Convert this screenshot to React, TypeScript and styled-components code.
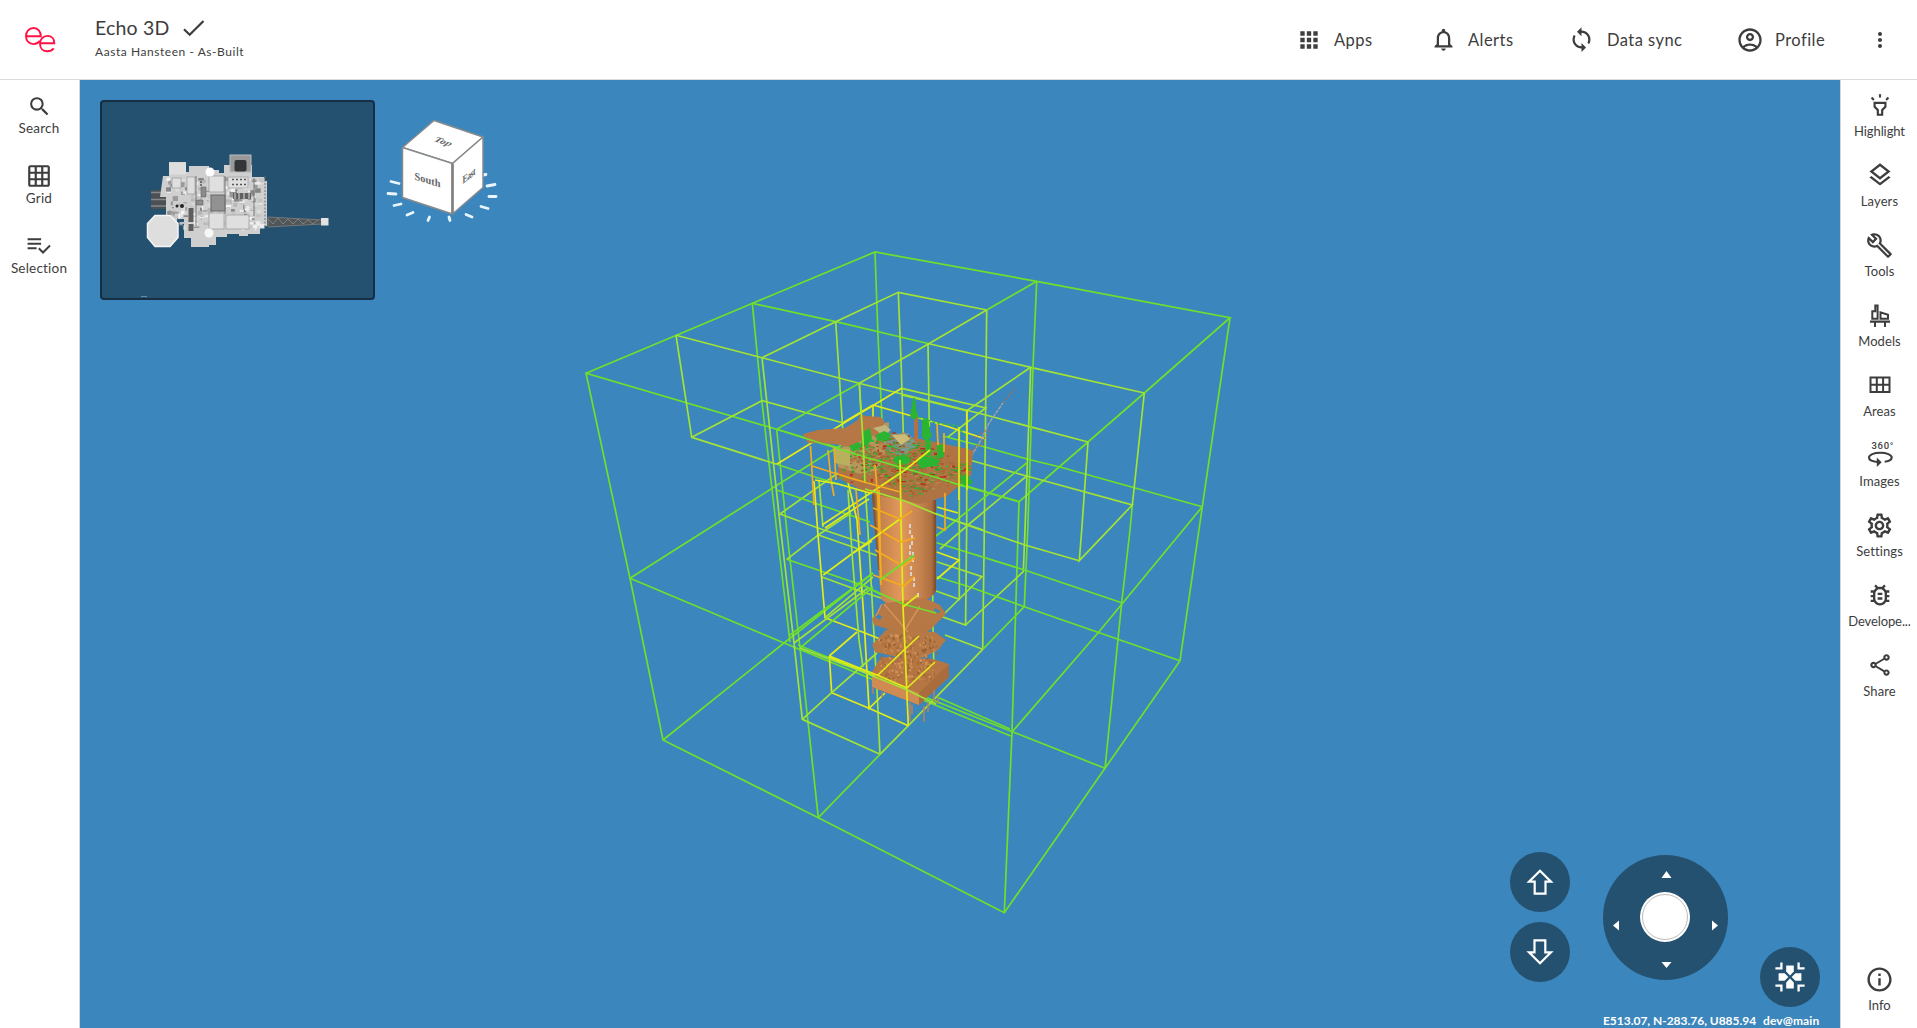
import React from "react";
import styled, { createGlobalStyle } from "styled-components";
import {
  MdSearch, MdOutlineGridOn, MdApps, MdSync, MdOutlineAccountCircle, MdMoreVert,
  MdOutlineHighlight, MdOutlineLayers, MdOutlineBuild, MdOutlineSettings,
  MdOutlineBugReport, MdOutlineShare, MdInfoOutline, MdNotificationsNone,
} from "react-icons/md";

const ink = "#3d3d3d";
const navy = "#245170";
const sea = "#3b86bd";

const Global = createGlobalStyle`
  * { box-sizing: border-box; }
  body { margin: 0; font-family: Lato, "Open Sans", sans-serif; color: ${ink}; background: #fff; overflow: hidden; }
  button { font: inherit; color: inherit; background: none; border: 0; padding: 0; cursor: pointer; }
`;

const Shell = styled.div`
  width: 100vw;
  height: 100vh;
  display: grid;
  grid-template: 80px minmax(0, 1fr) / 80px minmax(0, 1fr) 77px;
`;

const Header = styled.header`
  grid-column: 1 / -1;
  display: flex;
  align-items: center;
  border-bottom: 1px solid #dcdcdc;
`;

const Brand = styled.div`
  width: 95px;
  padding: 0 0 0 25px;
  display: flex;
`;

const Titles = styled.div`
  flex: 1;
  display: flex;
  flex-direction: column;
  padding-bottom: 4px;
`;

const TitleRow = styled.div`
  display: flex;
  align-items: center;
  gap: 12px;
  height: 28px;
  svg { margin-top: 1px; }
`;

const Title = styled.h1`
  margin: 0;
  width: 76px;
  font-size: 19.5px;
  line-height: 24px;
  font-weight: 400;
  letter-spacing: 0.2px;
  white-space: nowrap;
`;

const Subtitle = styled.div`
  font-size: 12px;
  line-height: 20px;
  letter-spacing: 0.55px;
`;

const Nav = styled.nav`
  display: flex;
  align-items: center;
  padding-right: 25px;
`;

const NavItem = styled.button<{ $w: number; $gap?: number; $ls?: number }>`
  width: ${(p) => p.$w}px;
  display: flex;
  align-items: center;
  gap: ${(p) => p.$gap ?? 12}px;
  font-size: 16.5px;
  letter-spacing: ${(p) => p.$ls ?? 0.45}px;
  white-space: nowrap;
`;

const Rail = styled.aside<{ $side: "left" | "right" }>`
  display: flex;
  flex-direction: column;
  padding: ${(p) => (p.$side === "left" ? "14px 1px 0 0" : "13px 0 0 1px")};
  border-${(p) => (p.$side === "left" ? "right" : "left")}: 1px solid #d6d6d6;
`;

const RailItem = styled.button<{ $gap: number; $size: number; $ls: number }>`
  height: 70px;
  display: flex;
  flex-direction: column;
  align-items: center;
  gap: ${(p) => p.$gap}px;
  font-size: ${(p) => p.$size}px;
  line-height: 18px;
  letter-spacing: ${(p) => p.$ls}px;
`;

const IconBox = styled.span`
  width: 28px;
  height: 24px;
  display: grid;
  place-items: center;
  place-content: center;
`;

const Spacer = styled.div`
  flex: 1;
`;

const RailFoot = styled.div`
  display: grid;
  height: 61px;
`;

const Viewport = styled.main`
  position: relative;
  overflow: hidden;
  background: ${sea};
`;

const Canvas = styled.svg`
  position: absolute;
  inset: 0;
  width: 100%;
  height: 100%;
  display: block;
`;

const TopTools = styled.div`
  position: relative;
  display: flex;
  gap: 10px;
  padding: 20px;
`;

const MiniMap = styled.div`
  width: 275px;
  height: 200px;
  background: ${navy};
  border: 2px solid #162f44;
  border-radius: 4px;
  overflow: hidden;
  svg { display: block; }
`;

const Controls = styled.div`
  position: absolute;
  right: 20px;
  bottom: 0;
  width: 310px;
  height: 176px;
  display: grid;
  grid-template-columns: 60px 125px 60px;
  column-gap: 32.500px;
  align-items: start;
`;

const LiftButtons = styled.div`
  display: flex;
  flex-direction: column;
  gap: 10px;
`;

const RoundButton = styled.button<{ $top?: number }>`
  width: 60px;
  height: 60px;
  margin-top: ${(p) => p.$top ?? 0}px;
  border-radius: 50%;
  background: ${navy};
  display: grid;
  place-items: center;
`;

const Joystick = styled.div`
  width: 125px;
  height: 125px;
  margin-top: 3px;
  border-radius: 50%;
  background: ${navy};
  svg { display: block; }
`;

const Status = styled.div`
  position: absolute;
  right: 20px;
  bottom: -2px;
  display: flex;
  gap: 11px;
  color: #fff;
  font-size: 12px;
  font-weight: 700;
  line-height: 18px;
  white-space: nowrap;
`;

const StatusText = styled.span<{ $w: number; $ls: number }>`
  width: ${(p) => p.$w}px;
  letter-spacing: ${(p) => p.$ls}px;
`;

/* ---------- small icons ---------- */

const Glyph = ({ children }: { children: React.ReactNode }) => (
  <svg width="24" height="24" viewBox="0 0 24 24" fill="currentColor">{children}</svg>
);

const Logo = () => (
  <svg width="31" height="26" viewBox="0 0 31 26" fill="none" stroke="#ff1243" strokeWidth="1.9">
    <path d="M0.9 9.3H15.8C15.8 4.5 13 1 8.5 1 4 1 1 4.6 1 9.1c0 4.9 3 8 7.6 8 2.6 0 4.7-1.1 6.2-3.2" />
    <path d="M15 16.300H29.300C29.300 12 26.600 8.900 22.400 8.900 18 8.900 15 12.300 15 16.700c0 4.600 3 7.600 7.400 7.600 2.700 0 4.800-1 6.300-2.900" />
  </svg>
);

const SelectionIcon = () => (
  <Glyph>
    <path d="M0.6 4.3h13.5v2H.6zM.6 8.8h13.5v2H.6zM.6 13.3h9v2h-9z" />
    <path d="M11.800 14.300l4.200 4.200 7-7" fill="none" stroke="currentColor" strokeWidth="2" />
  </Glyph>
);

const ModelsIcon = () => (
  <Glyph>
    <path d="M2 17.500h20v2.200H2zM6 19h2v5.500H6zM16 19h2v5.500h-2z" />
    <path d="M4.300 15.700V8.300h3V2.500h2.300v13.200zM12.500 15.700V9.300l7.500 2.500v3.900z" fill="none" stroke="currentColor" strokeWidth="2" />
  </Glyph>
);

const AreasIcon = () => (
  <Glyph>
    <path fillRule="evenodd" d="M1.500 3.500h21v16.500h-21zM3.500 5.500v5.200h4.300V5.500zm6.300 0v5.200h4.300V5.500zm6.300 0v5.200h4.400V5.500zM3.500 12.700V18h4.300v-5.300zm6.300 0V18h4.300v-5.300zm6.300 0V18h4.400v-5.300z" />
  </Glyph>
);

const ImagesIcon = () => (
  <svg width="28" height="28" viewBox="0 0 28 28" overflow="visible">
    <text x="5.500" y="8" fontFamily="Roboto" fontSize="9.500" fontWeight="500" textLength="22" fill={ink}>360°</text>
    <path d="M11.500 21C6 20.500 3 18.500 3 16.500c0-2.700 5-4.700 11.300-4.700s11.400 2 11.400 4.700c0 2-2.800 3.700-7 4.300" fill="none" stroke={ink} strokeWidth="2.100" />
    <path d="M10.800 16.500l4.900 4.800-4.900 4.800z" fill={ink} />
  </svg>
);

const ArrowIcon = ({ down }: { down?: boolean }) => (
  <svg width="30" height="30" viewBox="0 0 30 30" transform={down ? "rotate(180)" : undefined}>
    <path d="M15 3.700L26 14.700H20.500V26.700H9.700V14.700H4z" fill="none" stroke="#fff" strokeWidth="2.200" />
  </svg>
);

const RecenterIcon = () => (
  <svg width="30" height="30" viewBox="0 0 30 30">
    <g fill="#fff">
      {[0, 90, 180, 270].map((r) => (
        <path key={r} d="M11.200 3.600h7.600v6L15 13.400l-3.800-3.800z" transform={`rotate(${r} 15 15)`} />
      ))}
    </g>
    <g fill="none" stroke="#fff" strokeWidth="2.300">
      {[0, 90, 180, 270].map((r) => (
        <path key={r} d="M6.400 0.400v6H0.400" transform={`rotate(${r} 15 15)`} />
      ))}
    </g>
  </svg>
);

/* ---------- 3D scene ---------- */

function rng(seed: number) {
  let s = seed;
  return () => {
    s = (s * 16807) % 2147483647;
    return s / 2147483647;
  };
}

const colors: Record<string, string> = {
  g: "#6ee02b", l: "#a2e334", y: "#e2ec18", o: "#f3ac1c",
};

type Seg = [string, string];

const backLines: Seg[] = [
  ["g", "586,373.3 752,303.5 875,252 1036.7,281.3 1230,317.7 1144.3,393 1088,442 1019,501.7 776.7,429.3 586,373.3 630,578.3 663,740 818.3,817.7 1004.3,912.7 1105,768.3 1180,660.7 1202.3,506.7 1230,317.7"],
  ["g", "1019,501.7 1012,732 1004.3,912.7"],
  ["g", "875,252 878,336 882,421 886,480"],
  ["g", "663,740 784,643 873,573"],
  ["g", "630,578.3 773,487.7 828,453 882,421"],
  ["g", "630,578.3 784,643 1010.7,736"],
  ["g", "1202.3,506.7 1060,467 1027,459 985,447 943,436"],
  ["g", "1202.3,506.7 1099,631.7 1012,732"],
  ["g", "752.3,303.3 761.7,400 776.7,530 790,642"],
  ["g", "776.7,429.3 786.7,530 800,648 818.3,817.7"],
  ["g", "752.3,303.3 835.7,321.7 928,343.5"],
  ["l", "928,343.5 1030.7,367.3 1144.3,393"],
  ["l", "676,335.3 762,357.7 859,383.3 985.7,415 1088,442"],
  ["l", "676,335.3 691.7,437.3 776.7,464.3"],
  ["l", "691.7,437.3 762,400.7 842.7,422.7"],
  ["g", "776.7,464.3 818,478 880,496"],
  ["l", "762,357.7 780.7,530 794,643 802.3,719.3 880,754.3"],
  ["l", "762,357.7 835.7,321.7 898.3,292.3 986.7,310"],
  ["g", "776.7,429.3 859.3,383.3"],
  ["l", "859.3,383.3 928.3,344 986.7,310"],
  ["g", "986.7,310 1036.7,281.3"],
  ["l", "898.3,292.3 901,360 903.3,433"],
  ["l", "986.7,310 985.5,420 984.3,530 982.7,649.3"],
  ["l", "928,344 929.3,427"],
  ["l", "835.7,321.7 842.7,429"],
  ["l", "859.3,383.3 865,483 871,580 877,690 880,754.3"],
  ["g", "1036.7,281.3 1033,366.7 1030,460 1027.7,530 1024.3,606.7"],
  ["l", "1030.7,367.3 1025,530 1023.3,571.7 965.6,625"],
  ["l", "1144.3,393 1132.3,505"],
  ["g", "1132.3,505 1130,530 1121.7,602.7 1105,768.3"],
  ["l", "1088,442 1081.7,530 1079.3,560.7 1132.3,505 1026.7,476 966.7,459.3 943,451.7"],
  ["l", "1079.3,560.7 1025,545 966.7,525 910,504"],
  ["g", "936.7,542.7 1026.7,570.7 1121.7,602.7"],
  ["g", "936.7,576.7 970,587 1024.3,606.7 1180,660.7"],
  ["g", "818.3,817.7 880,754.3"],
  ["l", "880,754.3 908.3,725.7 936.7,696.7 982.7,649.3"],
  ["g", "982.7,649.3 1024.3,606.7"],
  ["g", "798,645 905,689 1013,732 1105,768.3"],
  ["l", "966.7,410.7 1030.7,367.3"],
  ["l", "966.7,410.7 966.7,525 965.6,625 906,604"],
  ["l", "901.7,388.3 985.7,408 948,437"],
  ["l", "901.7,395 966.7,410.7"],
  ["y", "873,405 940,424 985.7,439"],
  ["y", "901.7,388.3 844,423 776.7,464.3"],
  ["l", "1026.7,476 968,525 940,549"],
  ["g", "1026.7,463 946.7,528 910,555"],
  ["g", "1019,501.7 963,486 930,477"],
  ["l", "959.3,427.3 959.3,599.3 936,591"],
  ["l", "936.7,561.7 982,576.7 945,613"],
  ["y", "936.7,552 959,560 937,579"],
  ["g", "786.7,559.3 866.7,586.7 903,607"],
  ["l", "786.7,559.3 818.3,535 851,513"],
  ["l", "780,514 818,528 866,544"],
  ["l", "780,514 835,475 862,460"],
  ["g", "776.7,490 835,510 870,522"],
  ["l", "818.3,535 890,560"],
  ["y", "823.3,575 853,553 872,541"],
  ["l", "822,577 860,591 905,606"],
  ["y", "814,481 818,535 825,617.7 865,633 905,649"],
  ["l", "819,481 823,527"],
  ["l", "848,490 852,553 859,640 863,667"],
  ["y", "847,478 857,520 864,620 869,708.3 885,693"],
  ["l", "825,617.7 873,577"],
  ["g", "790,635 873,573"],
  ["l", "794,643 868,588"],
  ["g", "800,648 873,587"],
  ["y", "829.3,656 857,632"],
  ["y", "829.3,656 831.7,692.7 869,708.3 908.3,725.7"],
  ["l", "831.7,692.7 802.3,719.3"],
  ["l", "831.7,692.7 877,653"],
  ["l", "945,635 982.7,649.3"],
  ["l", "932.7,595 932.7,613 934.3,690"],
  ["g", "937,697 1010,729"],
  ["y", "873,405 873,430"],
  ["y", "873,405 843,422.7"],
];

const frontLines: Seg[] = [
  ["g", "776.7,429.3 858,455 935,477 963,486"],
  ["l", "859.3,383.3 863,440 865,483"],
  ["y", "822,525 866,496 905,470 930,450"],
  ["y", "825,528 869,499"],
  ["o", "810.5,446 814,505"],
  ["o", "828,450 831,480 834,496"],
  ["y", "815,480 838,484 870,493"],
  ["o", "834,447 836,480"],
  ["o", "856,490 860,535"],
  ["y", "900,460 901,520 903,607 905,649 908.3,725.7"],
  ["o", "875,465 878,500 881,585"],
  ["o", "879,490 881,580"],
  ["o", "812,466 850,478 900,492"],
  ["y", "853,553 900,519"],
  ["o", "870,525 900,542 915,538"],
  ["o", "873,508 900,519 912,511"],
  ["o", "875,550 903,566 915,558"],
  ["o", "873,575 904,586 914,577"],
  ["l", "865,489 905,501 936,514 983,530"],
  ["y", "829.3,656 877,675 907,688"],
  ["y", "830,657.5 875,676"],
  ["g", "858,583 903,604 936,613"],
  ["g", "880,580 914.3,555"],
  ["y", "877,676 905,649 919,636"],
  ["y", "907,688 935,662"],
  ["y", "903,607 918,595"],
  ["l", "800,648 858,670 905,689 936,704"],
  ["o", "945,493 945,530 937,527"],
  ["y", "937,507 958,513"],
  ["y", "967,410 967,490"],
  ["y", "959,427 959,500"],
  ["o", "937,424 938,445"],
  ["o", "944,433 944,452"],
];

const Lines = ({ list }: { list: Seg[] }) => (
  <g fill="none" strokeWidth="1.700">
    {list.map(([c, pts], i) => (
      <polyline key={i} points={pts} stroke={colors[c]} />
    ))}
  </g>
);

const pick = (r: () => number, tones: string[]) => tones[Math.floor(r() * tones.length)];

const deckDots = (() => {
  const r = rng(77);
  const out: { x: number; y: number; w: number; h: number; c: string }[] = [];
  const tones = ["#a9572c", "#b32a18", "#2aa62b", "#35b735", "#c98150", "#8e7b3a", "#b57645", "#4a9a35", "#b57645", "#a8683c"];
  for (let i = 0; i < 900; i++) {
    const u = r();
    const v = r();
    // sheared deck plane, from the near left edge to the far right edge
    const x = 838 + u * 76 + v * 56;
    const y = 456 + u * 38 - v * 24 + (r() - 0.5) * 12;
    out.push({ x, y, w: 1 + r() * 4, h: 0.7 + r() * 1.1, c: pick(r, tones) });
  }
  for (let i = 0; i < 120; i++) {
    const x = 838 + r() * 50;
    out.push({ x, y: 430 + r() * 52, w: 1 + r() * 2.5, h: 1 + r() * 1.5, c: pick(r, tones) });
  }
  return out;
})();

const plateDots = (() => {
  const r = rng(913);
  return Array.from({ length: 260 }, () => ({
    x: 878 + r() * 58, y: 634 + r() * 46, w: 0.8 + r() * 1.6, h: 0.8 + r() * 2.6,
    c: pick(r, ["#95602f", "#d59459", "#a0683c", "#c68750"]),
  }));
})();

const Dots = ({ list }: { list: { x: number; y: number; w: number; h: number; c: string }[] }) => (
  <g>
    {list.map((d, i) => <rect key={i} x={d.x} y={d.y} width={d.w} height={d.h} fill={d.c} />)}
  </g>
);

const Platform = () => (
  <g>
    {/* flare boom */}
    <path d="M958 478L981 440 989 423 1003 403" fill="none" stroke="#a9a3a5" strokeWidth="1.400" strokeDasharray="4 1" />
    <path d="M1003 403L1016 387M974 438l14-9M980 446l9-15M971 452l8-8" stroke="#b86a45" strokeWidth="1.200" strokeDasharray="2 2" />
    {/* shaft */}
    <path d="M872 492L936 500V590C934 598 921 604 903 605 892 606 885 603 881 599L874 520z" fill="url(#shaft)" />
    <path d="M873 495l2 25 4 50" stroke="#855128" strokeWidth="2" fill="none" opacity=".7" />
    <path d="M910 524v10M912 535v12M910 545v14M913 552v10M911 566v10M914 577v12M918 593v5" stroke="#d9d3cb" strokeWidth="2" strokeDasharray="4 2" />
    {/* lower plates */}
    <path d="M887 603h40v50h-40z" fill="#ae7040" />
    <path fillRule="evenodd" d="M872 619L885 603 925 598 940 605 946 614 930 630 918 636 905 634 874 625zM878 614l4 3-2 3-5-3zM935 608l5 3-1 2-5-2z" fill="#b67845" />
    <path d="M872 645L886 630 935 632 946 640 938 650 915 661 875 652z" fill="#b67845" />
    <path d="M880 659h46v20h-46z" fill="#ab6f41" />
    <path d="M872 672L881 657 933 659 949 664 949 677 919 705 872 687z" fill="#b67643" />
    <Dots list={plateDots} />
    <path d="M872 675L919 693V705L872 687z" fill="#cf8b52" />
    <path d="M919 693L949 664V677L919 705z" fill="#a96d3d" />
    <path d="M884 604l24 28M905 630l15-24M882 604l-6 12" stroke="#d89158" strokeWidth="1.500" />
    <path d="M910 703v18M924 706v16M928 702v10M934 690v12M938 697v7M873 688v6M882 692v5M912 705v9" stroke="#bd8258" strokeWidth="1.400" />
    {/* topside */}
    <path d="M838 452L848 440 880 431 925 440 973 450 971 475 947 496 920 504 868 493 838 478z" fill="#b07444" />
    <path d="M835 450L860 440 878 425 889 422 888 445 878 470 860 474 838 467z" fill="#b39a5c" />
    <path d="M887 434L908 433 918 445 903 456 884 450z" fill="#749c90" />
    <Dots list={deckDots} />
    <path d="M835 449h15v17l-15-3z" fill="#b9b05e" />
    <path d="M803 434L818 430 845 428 858 420 860 414 866 416 881 417 885 422 878 434 862 440 850 447 834 444 808 443z" fill="#b57746" />
    <path d="M873 428l12-3 6 5-7 6z" fill="#c0b57c" />
    <path d="M892 435l13-1 5 5-9 6z" fill="#cdbb78" />
    <path d="M914 414h4v25h-4z" fill="#b47045" />
    {/* deck equipment */}
    <g fill="#2bb431">
      <path d="M913 398l2 0 1 10 2 8-3 4-5-3 1-6z" />
      <path d="M863 432l7-4 2 11-5 7-6-2zM849 446l10-4 3 4-9 6zM876 435l8-4 7 3-4 6-10 1z" />
      <ellipse cx="902" cy="460" rx="9" ry="4.500" />
      <path d="M922 420l6-2 2 12 2 6-5 6-5-5zM937 445l7-1v13l-7 1zM917 463l5-8 18 5-3 6-16 2z" />
      <path d="M960 477l7-3 6 9-8 3-4-3z" />
      <path d="M925 440h6v16l-5-2z" />
    </g>
    <path d="M918 417l15 5 24 4 10 11" fill="none" stroke="#2fb84a" strokeWidth="1.600" strokeDasharray="3 2" />
  </g>
);

const Scene = () => (
  <Canvas viewBox="80 80 1760 948" preserveAspectRatio="xMinYMin slice">
    <defs>
      <linearGradient id="shaft">
        <stop offset="0" stopColor="#80502d" />
        <stop offset=".1" stopColor="#c07f4c" />
        <stop offset=".45" stopColor="#e2985a" />
        <stop offset=".75" stopColor="#c5834f" />
        <stop offset=".93" stopColor="#ad6f40" />
        <stop offset="1" stopColor="#774a29" />
      </linearGradient>
    </defs>
    <Lines list={backLines} />
    <Platform />
    <Lines list={frontLines} />
  </Canvas>
);

/* ---------- minimap: plan view of the installation ---------- */

const planParts = (() => {
  const r = rng(4211);
  const tones = ["#f2f2f2", "#9a9a9a", "#b5b5b5", "#dcdcdc", "#858585", "#ececec", "#c4c4c4"];
  return Array.from({ length: 230 }, () => ({
    x: 166 + r() * 94, y: 177 + r() * 50, w: 1 + r() * 5, h: 1 + r() * 4, c: pick(r, tones),
  }));
})();

const Plan = () => (
  <svg width="271" height="196" viewBox="102 102 271 196">
    <path d="M268 217L322 220v4L268 227z" fill="#4f5659" stroke="#777" strokeWidth="1" />
    <path d="M268 219l5 5 5-6 5 6 5-5 5 5 5-5 5 5 5-4 5 4 5-4" fill="none" stroke="#85807c" strokeWidth="1" />
    <rect x="321" y="218" width="7.500" height="7.500" fill="#e2e2e2" />
    <path d="M151 190h15v19h-15z" fill="#4a5054" />
    <path d="M151 192.500h15M151 199.500h15M151 206h15" stroke="#85888b" strokeWidth="1.500" />
    <path d="M163 176h6v-14h17v10h3v-6h20v4h10v3h5v-8h28v12h12v4h3v45h-7v8h-12v2h-9v-2h-12v3h-11v8h-7v2h-18v-9h-7v-19h-18v-22h-6z" fill="#cfcfcf" />
    <rect x="169" y="162.500" width="17" height="12" fill="#dedede" />
    <rect x="230" y="155" width="21" height="17" fill="#999" stroke="#bbb" strokeWidth="1" />
    <rect x="234.500" y="160" width="12" height="11.500" rx="2" fill="#333638" />
    <Dots list={planParts} />
    <g fill="#dfdfdf" stroke="#999" strokeWidth=".7">
      <rect x="209" y="176" width="15" height="16" /><rect x="209" y="213" width="15" height="16" />
      <rect x="226" y="215" width="23" height="14" /><rect x="187" y="177" width="8" height="17" />
      <rect x="172" y="178" width="9" height="10" /><rect x="228" y="177" width="20" height="11" />
    </g>
    <rect x="211" y="195" width="14" height="16" fill="#929292" stroke="#666" />
    <path d="M201 187h5v10h-5zM196 200h7v5h-7z" fill="#8b8b8b" stroke="#666" strokeWidth=".6" />
    <path d="M233 193h18v6h-18z" fill="#5e6061" />
    <path d="M232 179.500h14M232 184.500h14M200 182h4M200 185h4" stroke="#555" strokeWidth="1.500" strokeDasharray="2 2" />
    <path d="M235 193v6M239 193v6M244 193v6M249 193v6" stroke="#ddd" />
    <path d="M191 208v14M191 224v7" stroke="#5e5e5e" strokeWidth="5" />
    <circle cx="177" cy="206" r="1.500" fill="#222" /><circle cx="182" cy="206" r="2" fill="#222" />
    <path d="M265 176v52" stroke="#707070" strokeDasharray="2 1.500" />
    <path d="M225 176v38M254 178v38M196 176v50" stroke="#777" strokeWidth="1" />
    <circle cx="210" cy="172" r="4.500" fill="#fff" /><circle cx="209" cy="233" r="4.500" fill="#f7f7f7" />
    <path d="M155 215.500h15l8 8v14l-8 9h-15l-7.500-9v-14z" fill="#dedede" stroke="#f5f5f5" strokeWidth="1.500" />
    <path d="M141 296.500h6" stroke="#8296a4" strokeWidth=".8" />
  </svg>
);

const ticks = [
  [391, 182, 399, 184], [388, 194, 396, 194.5], [394, 206, 401, 204.5], [407, 215.5, 413, 213],
  [428, 221, 429.5, 217.5], [450, 221, 449, 217.5], [472, 217.5, 466, 215], [488, 209, 481, 207],
  [496, 197, 489, 197], [495, 185, 487, 186.5], [486, 175, 483, 175.5],
];

const ViewCube = () => (
  <svg width="124" height="130" viewBox="385 100.500 124 130">
    <g stroke="#e9f6ff" strokeWidth="2.800" strokeLinecap="round">
      {ticks.map((t, i) => <line key={i} x1={t[0]} y1={t[1]} x2={t[2]} y2={t[3]} />)}
    </g>
    <g fill="#fff" stroke="#868b8e" strokeWidth="1.500" strokeLinejoin="round">
      <path d="M434 121L483 137.500 452.500 164 402.500 148z" />
      <path d="M402.500 148L452.500 164V214.500L402.500 198z" />
      <path d="M452.500 164L483 137.500V188L452.500 214.500z" />
    </g>
    <path d="M452.500 164v50" stroke="#808080" strokeWidth="2.600" />
    <g fontFamily="Liberation Serif, serif" fontSize="10.800" fontWeight="700" fill="#666" textAnchor="middle">
      <text transform="matrix(.96 .3 0 1 427.500 184)">South</text>
      <text transform="matrix(.72 -.55 0 1 469 179.500)" textLength="18">East</text>
      <text transform="matrix(.95 .32 -.7 .55 441 144)">Top</text>
    </g>
  </svg>
);

/* ---------- page ---------- */

const leftItems = [
  { label: "Search", icon: <MdSearch size={25} /> },
  { label: "Grid", icon: <MdOutlineGridOn size={26} /> },
  { label: "Selection", icon: <SelectionIcon /> },
];

const rightItems = [
  { label: "Highlight", icon: <MdOutlineHighlight size={26} />, ls: -0.1 },
  { label: "Layers", icon: <MdOutlineLayers size={28} /> },
  { label: "Tools", icon: <MdOutlineBuild size={27} /> },
  { label: "Models", icon: <ModelsIcon /> },
  { label: "Areas", icon: <AreasIcon /> },
  { label: "Images", icon: <ImagesIcon /> },
  { label: "Settings", icon: <MdOutlineSettings size={29} /> },
  { label: "Develope...", icon: <MdOutlineBugReport size={28} />, ls: -0.1 },
  { label: "Share", icon: <MdOutlineShare size={26} /> },
];

export default function App() {
  return (
    <>
      <Global />
      <Shell>
        <Header>
          <Brand><Logo /></Brand>
          <Titles>
            <TitleRow>
              <Title>Echo 3D</Title>
              <svg width="22" height="17" viewBox="0 0 22 17"><path d="M1 9.200l5.700 5.500L20.500 1" fill="none" stroke={ink} strokeWidth="2.200" /></svg>
            </TitleRow>
            <Subtitle>Aasta Hansteen - As-Built</Subtitle>
          </Titles>
          <Nav>
            <NavItem $w={134}><MdApps size={26} />Apps</NavItem>
            <NavItem $w={138} $gap={11}><MdNotificationsNone size={27} />Alerts</NavItem>
            <NavItem $w={168} $gap={12}><MdSync size={27} />Data sync</NavItem>
            <NavItem $w={132} $gap={11}><MdOutlineAccountCircle size={28} />Profile</NavItem>
            <NavItem $w={24}><MdMoreVert size={28} /></NavItem>
          </Nav>
        </Header>

        <Rail $side="left">
          {leftItems.map((it) => (
            <RailItem key={it.label} $gap={1} $size={13.5} $ls={0.2}><IconBox>{it.icon}</IconBox>{it.label}</RailItem>
          ))}
        </Rail>

        <Viewport>
          <Scene />
          <TopTools>
            <MiniMap><Plan /></MiniMap>
            <ViewCube />
          </TopTools>
          <Controls>
            <LiftButtons>
              <RoundButton><ArrowIcon /></RoundButton>
              <RoundButton><ArrowIcon down /></RoundButton>
            </LiftButtons>
            <Joystick>
              <svg width="125" height="125" viewBox="0 0 125 125">
                <g fill="#fff">
                  <path d="M63.500 16l5 7h-10zM63.500 113l5-6h-10zM10 70.500l6-5v10zM115 70.500l-6-5v10z" />
                  <circle cx="62" cy="62" r="25" />
                </g>
                <circle cx="62" cy="62" r="22.500" fill="none" stroke="#aaa" strokeWidth=".8" />
              </svg>
            </Joystick>
            <RoundButton $top={95}><RecenterIcon /></RoundButton>
          </Controls>
          <Status>
            <StatusText $w={149} $ls={-0.03}>E513.07, N-283.76, U885.94</StatusText>
            <StatusText $w={57} $ls={0.1}>dev@main</StatusText>
          </Status>
        </Viewport>

        <Rail $side="right">
          {rightItems.map((it) => (
            <RailItem key={it.label} $gap={5} $size={13} $ls={it.ls ?? 0.1}><IconBox>{it.icon}</IconBox>{it.label}</RailItem>
          ))}
          <Spacer />
          <RailFoot>
            <RailItem $gap={5} $size={13} $ls={0}><IconBox><MdInfoOutline size={29} /></IconBox>Info</RailItem>
          </RailFoot>
        </Rail>
      </Shell>
    </>
  );
}
